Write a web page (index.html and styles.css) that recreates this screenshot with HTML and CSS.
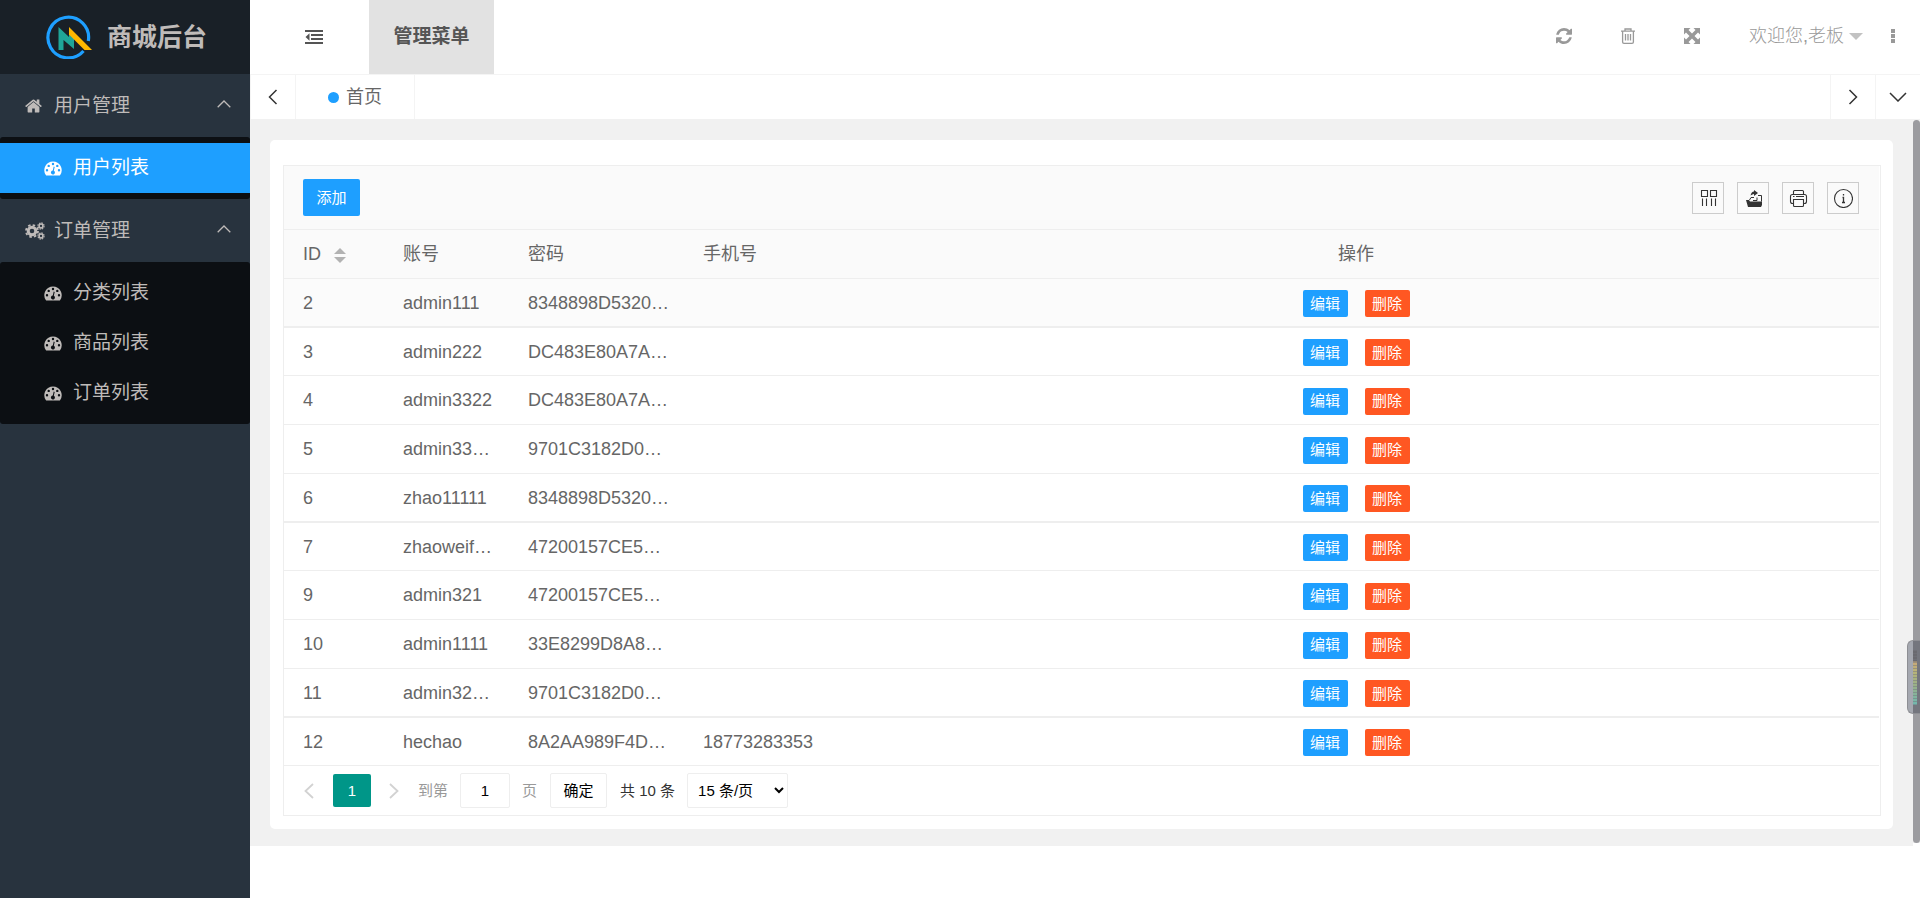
FILE: index.html
```html
<!DOCTYPE html>
<html lang="zh-CN">
<head>
<meta charset="utf-8">
<title>商城后台</title>
<link rel="stylesheet" href="styles.css">
</head>
<body>
<svg class="defs" aria-hidden="true">
  <symbol id="gauge" viewBox="0 0 18 15">
    <path fill="currentColor" fill-rule="evenodd" d="M9 0.500A8.700 8.700 0 0 0 1.800 14Q2.100 14.600 2.700 14.600H15.300Q15.900 14.600 16.200 14A8.700 8.700 0 0 0 9 0.500ZM9 1.800a1.200 1.200 0 1 1 0 2.400a1.200 1.200 0 1 1 0-2.400ZM4.700 3.700a1.200 1.200 0 1 1 0 2.400a1.200 1.200 0 1 1 0-2.400ZM13.300 3.700a1.200 1.200 0 1 1 0 2.400a1.200 1.200 0 1 1 0-2.400ZM3 8a1.200 1.200 0 1 1 0 2.400a1.200 1.200 0 1 1 0-2.400ZM15 8a1.200 1.200 0 1 1 0 2.400a1.200 1.200 0 1 1 0-2.400ZM9.700 5.600l1 .3-.9 3.800a2 2 0 1 1-1-.2Z"/>
  </symbol>
</svg>
<aside class="sidebar">
  <div class="brand">
    <svg class="brand-logo" viewBox="0 0 46 44" aria-hidden="true">
      <path d="M37.500 36A20.300 20.300 0 1 1 42.300 26" fill="none" stroke="#1e9fff" stroke-width="3.200"/>
      <path d="M12.500 12L23 22V16L28 21V34L17.500 25V35H12.500Z" fill="#1fa598"/>
      <path d="M23 12L46 35H38.500L23 19.500Z" fill="#ffb800"/>
    </svg>
    <span>商城后台</span>
  </div>
  <nav>
    <button class="group" type="button">
      <svg class="group-icon" viewBox="64 250 1664 1300" aria-hidden="true"><path fill="currentColor" d="M1472 992v480q0 26-19 45t-45 19h-384v-384h-256v384h-384q-26 0-45-19t-19-45v-480q0-1 .5-3t.5-3l575-474 575 474q1 2 1 6zm223-69l-62 74q-8 9-21 11h-3q-13 0-21-7l-692-577-692 577q-12 8-24 7-13-2-21-11l-62-74q-8-10-7-23.500t11-21.500l719-599q32-26 76-26t76 26l244 204v-195q0-14 9-23t23-9h192q14 0 23 9t9 23v408l219 182q10 8 11 21.500t-7 23.500z"/></svg>
      <span>用户管理</span>
      <svg class="fold" viewBox="0 0 14 12" aria-hidden="true"><path d="M.7 7.300L7 1L13.300 7.300" fill="none" stroke="currentColor" stroke-width="1.300"/></svg>
    </button>
    <div class="submenu">
      <a class="active" href="#users"><svg viewBox="0 0 18 15" aria-hidden="true"><use href="#gauge"/></svg>用户列表</a>
    </div>
    <button class="group" type="button">
      <svg class="group-icon gears" viewBox="0 0 20 18" aria-hidden="true">
        <g fill="none" stroke="currentColor">
          <circle cx="7" cy="9" r="3.800" stroke-width="3"/>
          <circle cx="7" cy="9" r="6" stroke-width="1.800" stroke-dasharray="2.500 2.212"/>
          <circle cx="16" cy="4" r="1.900" stroke-width="1.500"/>
          <circle cx="16" cy="4" r="3.100" stroke-width="1.100" stroke-dasharray="1.500 0.935"/>
          <circle cx="16" cy="14" r="1.900" stroke-width="1.500"/>
          <circle cx="16" cy="14" r="3.100" stroke-width="1.100" stroke-dasharray="1.500 0.935"/>
        </g>
      </svg>
      <span>订单管理</span>
      <svg class="fold" viewBox="0 0 14 12" aria-hidden="true"><path d="M.7 7.300L7 1L13.300 7.300" fill="none" stroke="currentColor" stroke-width="1.300"/></svg>
    </button>
    <div class="submenu">
      <a href="#categories"><svg viewBox="0 0 18 15" aria-hidden="true"><use href="#gauge"/></svg>分类列表</a>
      <a href="#goods"><svg viewBox="0 0 18 15" aria-hidden="true"><use href="#gauge"/></svg>商品列表</a>
      <a href="#orders"><svg viewBox="0 0 18 15" aria-hidden="true"><use href="#gauge"/></svg>订单列表</a>
    </div>
  </nav>
</aside>
<div class="main">
  <header class="topbar">
    <button class="collapse" type="button" aria-label="收起菜单">
      <svg viewBox="0 0 18 15" width="18" height="15" aria-hidden="true"><path fill="currentColor" d="M0 0H18V2H0ZM6 4H18V6H6ZM6 8H18V10H6ZM0 12H18V14H0ZM4.500 3.300V10.700L.5 7Z"/></svg>
    </button>
    <a class="module" href="#menu">管理菜单</a>
    <div class="tools">
      <button type="button" aria-label="刷新"><svg width="16" height="16" viewBox="0 0 1536 1536"><path fill="currentColor" d="M1511 928q0 5-1 7-64 268-268 434.500T764 1536q-146 0-282.500-55T238 1324l-129 129q-19 19-45 19t-45-19-19-45V960q0-26 19-45t45-19h448q26 0 45 19t19 45-19 45l-137 137q71 66 161 102t187 36q134 0 250-65t186-179q11-17 53-117 8-23 30-23h192q13 0 22.500 9.500t9.500 22.500zm25-800v448q0 26-19 45t-45 19h-448q-26 0-45-19t-19-45 19-45l138-138Q969 256 768 256q-134 0-250 65T332 500q-11 17-53 117-8 23-30 23H50q-13 0-22.500-9.500T18 608v-7q65-268 270-434.500T768 0q146 0 284 55.500T1297 212l130-129q19-19 45-19t45 19 19 45z"/></svg></button>
      <button type="button" aria-label="清理"><svg width="16" height="16" viewBox="0 0 16 16"><path fill="none" stroke="currentColor" stroke-width="1.300" d="M1 3.200H15M5 3V1H11V3M2.600 3.500V14Q2.600 15.300 4 15.300H12Q13.400 15.300 13.400 14V3.500M5.500 6V12.500M8 6V12.500M10.500 6V12.500"/></svg></button>
      <button type="button" aria-label="全屏"><svg width="16" height="16" viewBox="0 0 16 16"><path fill="currentColor" d="M0 0H6.500L4.500 2L8 5.500L11.500 2L9.500 0H16V6.500L14 4.500L10.500 8L14 11.500L16 9.500V16H9.500L11.500 14L8 10.500L4.500 14L6.500 16H0V9.500L2 11.500L5.500 8L2 4.500L0 6.500Z"/></svg></button>
    </div>
    <button class="account" type="button">欢迎您,老板<i class="caret"></i></button>
    <button class="more" type="button" aria-label="更多"><svg width="4" height="15" viewBox="0 0 4 15"><path fill="currentColor" d="M0 0H4V4H0ZM0 5H4V9H0ZM0 10H4V14H0Z"/></svg></button>
  </header>
  <div class="tabs">
    <button class="tab-nav first" type="button" aria-label="向左"><svg width="10" height="16" viewBox="0 0 10 16"><path d="M8.500 1L1.500 8L8.500 15" fill="none" stroke="currentColor" stroke-width="1.500"/></svg></button>
    <a class="tab" href="#home"><i class="dot"></i>首页</a>
    <button class="tab-nav last" type="button" aria-label="向右"><svg width="10" height="16" viewBox="0 0 10 16"><path d="M1.500 1L8.500 8L1.500 15" fill="none" stroke="currentColor" stroke-width="1.500"/></svg></button>
    <button class="tab-nav" type="button" aria-label="标签操作"><svg width="18" height="10" viewBox="0 0 18 10"><path d="M1 1L9 9L17 1" fill="none" stroke="currentColor" stroke-width="1.500"/></svg></button>
  </div>
  <div class="content">
    <main class="card">
      <section class="grid">
        <div class="toolbar">
          <button class="btn add" type="button">添加</button>
          <div class="toolbar-icons">
            <button type="button" aria-label="筛选列"><svg viewBox="0 0 20 20"><path fill="none" stroke="currentColor" stroke-width="1.100" d="M3.500 2.500H9.500V8.500H3.500ZM12.500 2.500H18.500V8.500H12.500ZM4.500 10.500V18M8.500 10.500V18M13.500 10.500V18M17.500 10.500V18"/></svg></button>
            <button type="button" aria-label="导出"><svg viewBox="0 0 20 20"><path fill="currentColor" d="M3 12H6L7 13.500H19V17L18 19H5Z"/><path fill="none" stroke="currentColor" d="M6.500 12L8 9.500H11M15 7.500H18.500V13.500M10 12.500H14V9.500"/><path fill="currentColor" d="M7.500 7.500Q8.500 3.500 11 3.500V2L15 5L11 8V6Q9.500 6 7.500 7.500Z"/></svg></button>
            <button type="button" aria-label="打印"><svg viewBox="0 0 20 20"><path fill="none" stroke="currentColor" stroke-width="1.100" d="M5.500 6.500V3.500Q5.500 2.500 6.500 2.500H14.500Q15.500 2.500 15.500 3.500V6.500M5.500 15.500H4.500Q2.500 15.500 2.500 13.500V8.500Q2.500 6.500 4.500 6.500H16.500Q18.500 6.500 18.500 8.500V13.500Q18.500 15.500 16.500 15.500H15.500M5.500 11.500H15.500V17.500Q15.500 18.500 14.500 18.500H6.500Q5.500 18.500 5.500 17.500ZM5 8.500H6.500M8 8.500H16"/></svg></button>
            <button type="button" aria-label="提示"><svg viewBox="0 0 20 20"><circle cx="10.500" cy="10.500" r="9" fill="none" stroke="currentColor" stroke-width="1.100"/><path fill="none" stroke="currentColor" stroke-width="1.300" d="M10.500 6V7.500M9.500 9.500H10.500V14.500M9 14.500H12"/></svg></button>
          </div>
        </div>
        <table>
          <colgroup><col class="c-id"><col class="c-account"><col class="c-password"><col class="c-phone"><col></colgroup>
          <thead>
            <tr><th>ID<span class="sort"><i></i><i></i></span></th><th>账号</th><th>密码</th><th>手机号</th><th class="ops">操作</th></tr>
          </thead>
          <tbody>
            <tr class="hover"><td>2</td><td>admin111</td><td>8348898D5320…</td><td></td><td class="ops"><button class="btn" type="button">编辑</button><button class="btn danger" type="button">删除</button></td></tr>
            <tr><td>3</td><td>admin222</td><td>DC483E80A7A…</td><td></td><td class="ops"><button class="btn" type="button">编辑</button><button class="btn danger" type="button">删除</button></td></tr>
            <tr><td>4</td><td>admin3322</td><td>DC483E80A7A…</td><td></td><td class="ops"><button class="btn" type="button">编辑</button><button class="btn danger" type="button">删除</button></td></tr>
            <tr><td>5</td><td>admin33…</td><td>9701C3182D0…</td><td></td><td class="ops"><button class="btn" type="button">编辑</button><button class="btn danger" type="button">删除</button></td></tr>
            <tr><td>6</td><td>zhao11111</td><td>8348898D5320…</td><td></td><td class="ops"><button class="btn" type="button">编辑</button><button class="btn danger" type="button">删除</button></td></tr>
            <tr><td>7</td><td>zhaoweif…</td><td>47200157CE5…</td><td></td><td class="ops"><button class="btn" type="button">编辑</button><button class="btn danger" type="button">删除</button></td></tr>
            <tr><td>9</td><td>admin321</td><td>47200157CE5…</td><td></td><td class="ops"><button class="btn" type="button">编辑</button><button class="btn danger" type="button">删除</button></td></tr>
            <tr><td>10</td><td>admin1111</td><td>33E8299D8A8…</td><td></td><td class="ops"><button class="btn" type="button">编辑</button><button class="btn danger" type="button">删除</button></td></tr>
            <tr><td>11</td><td>admin32…</td><td>9701C3182D0…</td><td></td><td class="ops"><button class="btn" type="button">编辑</button><button class="btn danger" type="button">删除</button></td></tr>
            <tr><td>12</td><td>hechao</td><td>8A2AA989F4D…</td><td>18773283353</td><td class="ops"><button class="btn" type="button">编辑</button><button class="btn danger" type="button">删除</button></td></tr>
          </tbody>
        </table>
        <div class="pager">
          <button class="arrow" type="button" aria-label="上一页"><svg width="10" height="16" viewBox="0 0 10 16"><path d="M9 1L1.500 8L9 15" fill="none" stroke="currentColor" stroke-width="1.800"/></svg></button>
          <button class="current" type="button">1</button>
          <button class="arrow" type="button" aria-label="下一页"><svg width="10" height="16" viewBox="0 0 10 16"><path d="M1 1L8.500 8L1 15" fill="none" stroke="currentColor" stroke-width="1.800"/></svg></button>
          <label class="jump">到第<input type="text" value="1">页</label>
          <button class="confirm" type="button">确定</button>
          <span class="total">共 10 条</span>
          <select aria-label="每页条数"><option>15 条/页</option></select>
        </div>
      </section>
    </main>
    <div class="scroll-thumb"></div>
  </div>
</div>
<div class="meter"><div class="meter-bars"></div></div>
</body>
</html>
```

FILE: styles.css
```css
* { box-sizing: border-box; }

body {
  margin: 0;
  min-height: 100vh;
  display: flex;
  position: relative;
  overflow: hidden;
  background: #fff;
  color: #666;
  font: 400 18px/24px "Liberation Sans", "Noto Sans CJK SC", sans-serif;
}

button, input, select { font: inherit; color: inherit; }
button { border: 0; padding: 0; background: none; cursor: pointer; }
a { color: inherit; text-decoration: none; }
svg { display: block; }
.defs { position: absolute; width: 0; height: 0; }

/* Sidebar */
.sidebar {
  flex: 0 0 250px;
  background: #28333e;
  color: #bfbbb9;
  font-size: 19px;
}
.brand {
  height: 74px;
  padding-left: 46px;
  display: flex;
  align-items: center;
  gap: 15px;
  background: #192027;
  font-size: 25px;
  font-weight: 700;
}
.brand-logo { width: 46px; height: 44px; }
.group {
  width: 100%;
  height: 63px;
  padding: 0 19px 0 25px;
  display: flex;
  align-items: center;
  text-align: left;
}
.group span { flex: 1; }
.group-icon { width: 17px; height: 14px; margin-right: 12px; }
.gears { width: 20px; height: 18px; margin-right: 9px; }
.fold { width: 14px; height: 12px; }
.submenu {
  padding: 6px 0;
  border-radius: 3px;
  background: #0c0f13;
}
.submenu a {
  height: 50px;
  padding-left: 44px;
  display: flex;
  align-items: center;
  gap: 11px;
}
.submenu svg { width: 18px; height: 15px; }
.submenu .active { background: #1e9fff; color: #fff; }

/* Top bar */
.main {
  flex: 1;
  min-width: 0;
  display: flex;
  flex-direction: column;
}
.topbar {
  height: 75px;
  padding-right: 25px;
  display: flex;
  border-bottom: 1px solid #f4f4f4;
  color: #999;
}
.collapse { width: 119px; padding: 0 46px 0 55px; color: #555; }
.module {
  width: 125px;
  display: flex;
  align-items: center;
  justify-content: center;
  background: #e2e2e2;
  color: #555;
  font-size: 19px;
  font-weight: 700;
}
.tools {
  margin-left: auto;
  padding-bottom: 2px;
  display: flex;
  align-items: center;
  gap: 48px;
}
.account {
  margin-left: 49px;
  padding-bottom: 2px;
  display: flex;
  align-items: center;
  gap: 5px;
  font-weight: 300;
}
.caret {
  border: 7px solid transparent;
  border-top-color: #c2c2c2;
  border-bottom: 0;
}
.more { margin-left: 28px; padding-bottom: 2px; }

/* Tab strip */
.tabs {
  height: 44px;
  display: flex;
  color: #333;
}
.tab-nav {
  width: 45px;
  display: flex;
  align-items: center;
  justify-content: center;
  border-left: 1px solid #f4f4f4;
}
.tab-nav.first { width: 46px; border-right: 1px solid #f4f4f4; }
.tab-nav.last { margin-left: auto; }
.tab {
  padding: 0 32px;
  display: flex;
  align-items: center;
  gap: 7px;
  border-right: 1px solid #f4f4f4;
  color: #666;
}
.dot { width: 11px; height: 11px; border-radius: 50%; background: #1e9fff; }

/* Content */
.content {
  position: relative;
  padding: 21px 20px 17px;
  margin-right: 7px;
  background: #f1f1f1;
}
.content::before {
  content: "";
  position: absolute;
  top: 0;
  right: -7px;
  bottom: 3px;
  width: 7px;
  background: #f1f1f1;
}
.scroll-thumb {
  position: absolute;
  top: 1px;
  right: -7px;
  bottom: 3px;
  width: 7px;
  border-radius: 4px;
  background: #9c9ca0;
}
.card {
  padding: 25px 12px 13px 13px;
  border-radius: 5px;
  background: #fff;
}
.grid { border: 1px solid #eee; padding-right: 1px; }
.toolbar {
  height: 64px;
  padding: 0 20px 0 19px;
  display: flex;
  align-items: center;
  justify-content: space-between;
  background: #fafafa;
  border-bottom: 1px solid #eee;
}
.btn {
  width: 45px;
  height: 27px;
  border-radius: 2px;
  background: #1e9fff;
  color: #fff;
  font-size: 15px;
}
.btn.add { width: 57px; height: 37px; }
.btn.danger { background: #ff5722; margin-left: 17px; }
.toolbar-icons { display: flex; gap: 13px; color: #333; }
.toolbar-icons button {
  width: 32px;
  height: 32px;
  padding: 5px;
  border: 1px solid #ccc;
}
.toolbar-icons svg { width: 20px; height: 20px; }

table {
  width: 100%;
  table-layout: fixed;
  border-collapse: separate;
  border-spacing: 0;
}
.c-id { width: 100px; }
.c-account { width: 125px; }
.c-password { width: 175px; }
.c-phone { width: 149px; }
th, td {
  height: 49px;
  padding: 0 19px;
  border-bottom: 1px solid #eee;
  text-align: left;
  white-space: nowrap;
}
th { background: #fafafa; font-weight: 400; }
tbody tr:nth-child(4n+1) td { border-bottom-width: 2px; }
tbody tr:nth-child(4n+2) td { height: 48px; }
.hover { background: #fbfbfb; }
th.ops, td.ops { text-align: center; }
td.ops { padding-top: 2px; }
.sort {
  display: inline-flex;
  flex-direction: column;
  gap: 3px;
  margin-left: 13px;
  vertical-align: middle;
}
.sort i { border: 6px solid transparent; }
.sort i:first-child { border-top: 0; border-bottom-color: #b2b2b2; }
.sort i:last-child { border-bottom: 0; border-top-color: #b2b2b2; }

/* Pager */
.pager {
  height: 49px;
  padding-left: 20px;
  display: flex;
  align-items: center;
  font-size: 15px;
  color: #333;
}
.arrow { color: #d2d2d2; }
.current {
  width: 38px;
  height: 33px;
  margin: 0 18px 0 19px;
  border-radius: 2px;
  background: #009688;
  color: #fff;
}
.jump {
  margin-left: 19px;
  display: flex;
  align-items: center;
  gap: 12px;
  color: #999;
}
.jump input {
  width: 50px;
  height: 35px;
  border: 1px solid #eee;
  border-radius: 2px;
  background: #fff;
  color: #000;
  text-align: center;
}
.confirm {
  width: 57px;
  height: 35px;
  margin: 0 13px;
  border: 1px solid #eee;
  border-radius: 2px;
  color: #000;
}
.pager select {
  width: 101px;
  height: 35px;
  margin-left: 12px;
  padding: 0 6px;
  border: 1px solid #eee;
  border-radius: 2px;
  background: #fff;
  color: #000;
}

/* Floating level meter at the window edge */
.meter {
  position: absolute;
  right: 0;
  top: 640px;
  width: 13px;
  height: 74px;
  padding: 9px 3px 8px 5px;
  border: 1px solid #8e8f94;
  border-right: 0;
  border-radius: 6px 0 0 6px;
  background: linear-gradient(90deg, #a5a8b0 5px, #74767e 5px);
}
.meter-bars {
  height: 100%;
  background:
    repeating-linear-gradient(#74767e80 0 1px, transparent 1px 3px),
    linear-gradient(#6a6a70 0 20%, #c8a878 22%, #b8b478 40%, #98b088 65%, #70b8b0);
}
```
